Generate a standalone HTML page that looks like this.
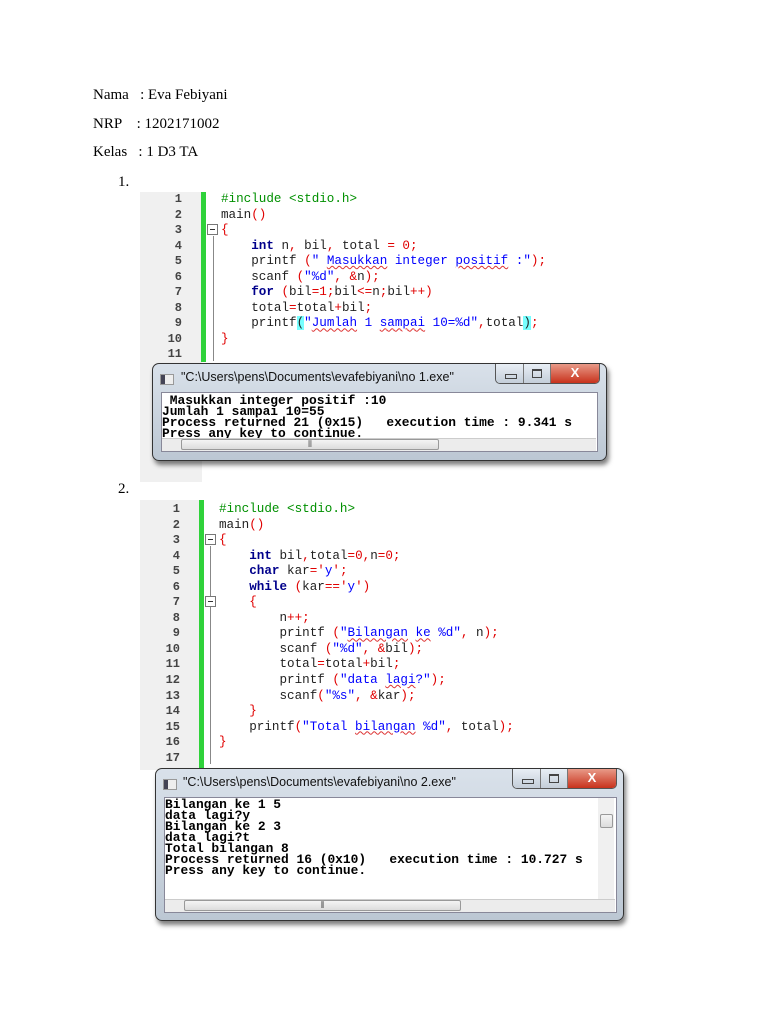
<!DOCTYPE html>
<html><head><meta charset="utf-8"><style>
body{margin:0;width:768px;height:1024px;background:#fff;position:relative;overflow:hidden;font-family:"Liberation Serif",serif;}
.t{position:absolute;font-size:15px;color:#000;white-space:pre;}
.gut{position:absolute;background:#f0f0f0;}
.bar{position:absolute;background:#2fd23a;width:5px;}
.code{position:absolute;font-family:"Liberation Mono",monospace;font-size:12.6px;white-space:pre;color:#222;line-height:15.55px;}
.ln{position:absolute;font-family:"Liberation Mono",monospace;font-size:12px;font-weight:bold;white-space:pre;color:#444;line-height:15.55px;text-align:right;width:40px;}
.k{color:#00008b;font-weight:bold}.s{color:#0000ff}.r{color:#e00000}.g{color:#009000}.sq{text-decoration:underline wavy #d33;text-decoration-thickness:1px}
.fold{position:absolute;border-left:1px solid #888;}
.fb{position:absolute;width:9px;height:9px;border:1px solid #777;background:#fff;}
.fb:after{content:"";position:absolute;left:2px;top:4px;width:5px;height:1px;background:#333}
.win{position:absolute;border:1px solid #333;border-radius:7px;background:linear-gradient(#d9e1ea,#bcc7d3);box-shadow:2px 4px 5px rgba(0,0,0,.5);}
.tt{position:absolute;font-family:"Liberation Sans",sans-serif;font-size:12.5px;color:#111;white-space:pre;}
.ico{position:absolute;width:12px;height:9px;background:linear-gradient(90deg,#445 0 4px,#eee 4px);border:1px solid #999}
.btns{position:absolute;height:19px;border:1px solid #555;border-top:none;border-radius:0 0 5px 5px;overflow:hidden;display:flex}
.btns div{background:linear-gradient(#e8eef5,#c4ced9);border-right:1px solid #777;position:relative}
.btns .mn:after{content:"";position:absolute;left:9px;top:10px;width:10px;height:3px;border:1px solid #444}
.btns .mx:after{content:"";position:absolute;left:8px;top:5px;width:8px;height:6px;border:1px solid #444;border-top-width:2px}
.btns .x{background:linear-gradient(#e89a88,#c8321c);border:none;color:#fff;font:bold 13px "Liberation Sans",sans-serif;text-align:center;line-height:18px}
.cons{position:absolute;background:#fff;border:1px solid #889;}
.ct{position:absolute;font-family:"Liberation Mono",monospace;font-weight:bold;font-size:12.9px;white-space:pre;color:#000;line-height:11px;}
.hs{position:absolute;background:#ececec;border-top:1px solid #ccc}
.thumb{position:absolute;background:linear-gradient(#f4f4f4,#dcdcdc);border:1px solid #999;border-radius:2px;font:9px sans-serif;text-align:center;color:#555}
</style></head><body>
<div class="t" style="left:93px;top:87px">Nama   : Eva Febiyani</div>
<div class="t" style="left:93px;top:116px">NRP    : 1202171002</div>
<div class="t" style="left:93px;top:144px">Kelas   : 1 D3 TA</div>
<div class="t" style="left:118px;top:174px">1.</div>
<div class="t" style="left:118px;top:481px">2.</div>

<!-- block 1 -->
<div class="gut" style="left:140px;top:192px;width:62px;height:290px"></div>
<div class="bar" style="left:201px;top:192px;height:170px"></div>
<div class="ln" style="left:142px;top:192px">1
2
3
4
5
6
7
8
9
10
11</div>
<div class="fold" style="left:213px;top:236px;height:125px"></div>
<div class="fb" style="left:207px;top:224px"></div>
<div class="code" style="left:221px;top:192px"><span class="g">#include &lt;stdio.h&gt;</span>
main<span class="r">()</span>
<span class="r">{</span>
    <span class="k">int</span> n<span class="r">,</span> bil<span class="r">,</span> total <span class="r">= 0;</span>
    printf <span class="r">(</span><span class="s">" <span class="sq">Masukkan</span> integer <span class="sq">positif</span> :"</span><span class="r">);</span>
    scanf <span class="r">(</span><span class="s">"%d"</span><span class="r">, &amp;</span>n<span class="r">);</span>
    <span class="k">for</span> <span class="r">(</span>bil<span class="r">=1;</span>bil<span class="r">&lt;=</span>n<span class="r">;</span>bil<span class="r">++)</span>
    total<span class="r">=</span>total<span class="r">+</span>bil<span class="r">;</span>
    printf<span style="background:#7ff">(</span><span class="s">"<span class="sq">Jumlah</span> 1 <span class="sq">sampai</span> 10=%d"</span><span class="r">,</span>total<span style="background:#7ff">)</span><span class="r">;</span>
<span class="r">}</span></div>

<div class="win" style="left:152px;top:363px;width:453px;height:96px">
  <div class="ico" style="left:7px;top:10px"></div>
  <div class="tt" style="left:28px;top:6px">"C:\Users\pens\Documents\evafebiyani\no 1.exe"</div>
  <div class="btns" style="left:342px;top:0;width:103px"><div class="mn" style="width:28px"></div><div class="mx" style="width:26px"></div><div class="x" style="width:49px">X</div></div>
  <div class="cons" style="left:8px;top:28px;width:435px;height:58px"></div>
  <div class="ct" style="left:9px;top:31px"> Masukkan integer positif :10
Jumlah 1 sampai 10=55
Process returned 21 (0x15)   execution time : 9.341 s
Press any key to continue.</div>
  <div class="hs" style="left:9px;top:74px;width:434px;height:12px"></div>
  <div class="thumb" style="left:28px;top:75px;width:256px;height:9px;line-height:9px">⦀</div>
</div>

<!-- block 2 -->
<div class="gut" style="left:140px;top:500px;width:62px;height:270px"></div>
<div class="bar" style="left:199px;top:500px;height:270px"></div>
<div class="ln" style="left:140px;top:502px">1
2
3
4
5
6
7
8
9
10
11
12
13
14
15
16
17</div>
<div class="fold" style="left:210px;top:546px;height:218px"></div>
<div class="fb" style="left:205px;top:534px"></div>
<div class="fb" style="left:205px;top:596px"></div>
<div class="code" style="left:219px;top:502px"><span class="g">#include &lt;stdio.h&gt;</span>
main<span class="r">()</span>
<span class="r">{</span>
    <span class="k">int</span> bil<span class="r">,</span>total<span class="r">=0,</span>n<span class="r">=0;</span>
    <span class="k">char</span> kar<span class="r">='</span><span class="s">y</span><span class="r">';</span>
    <span class="k">while</span> <span class="r">(</span>kar<span class="r">=='</span><span class="s">y</span><span class="r">')</span>
    <span class="r">{</span>
        n<span class="r">++;</span>
        printf <span class="r">(</span><span class="s">"<span class="sq">Bilangan</span> <span class="sq">ke</span> %d"</span><span class="r">,</span> n<span class="r">);</span>
        scanf <span class="r">(</span><span class="s">"%d"</span><span class="r">, &amp;</span>bil<span class="r">);</span>
        total<span class="r">=</span>total<span class="r">+</span>bil<span class="r">;</span>
        printf <span class="r">(</span><span class="s">"data <span class="sq">lagi</span>?"</span><span class="r">);</span>
        scanf<span class="r">(</span><span class="s">"%s"</span><span class="r">, &amp;</span>kar<span class="r">);</span>
    <span class="r">}</span>
    printf<span class="r">(</span><span class="s">"Total <span class="sq">bilangan</span> %d"</span><span class="r">,</span> total<span class="r">);</span>
<span class="r">}</span></div>

<div class="win" style="left:155px;top:768px;width:467px;height:151px">
  <div class="ico" style="left:7px;top:10px"></div>
  <div class="tt" style="left:27px;top:6px">"C:\Users\pens\Documents\evafebiyani\no 2.exe"</div>
  <div class="btns" style="left:356px;top:0;width:103px"><div class="mn" style="width:28px"></div><div class="mx" style="width:26px"></div><div class="x" style="width:49px">X</div></div>
  <div class="cons" style="left:8px;top:28px;width:451px;height:114px"></div>
  <div class="ct" style="left:9px;top:30px">Bilangan ke 1 5
data lagi?y
Bilangan ke 2 3
data lagi?t
Total bilangan 8
Process returned 16 (0x10)   execution time : 10.727 s
Press any key to continue.</div>
  <div class="hs" style="left:9px;top:130px;width:450px;height:12px"></div>
  <div class="thumb" style="left:28px;top:131px;width:275px;height:9px;line-height:9px">⦀</div>
  <div class="hs" style="left:442px;top:29px;width:16px;height:101px;border:none;background:#f0f0f0"></div>
  <div class="thumb" style="left:444px;top:45px;width:11px;height:12px"></div>
</div>
</body></html>
